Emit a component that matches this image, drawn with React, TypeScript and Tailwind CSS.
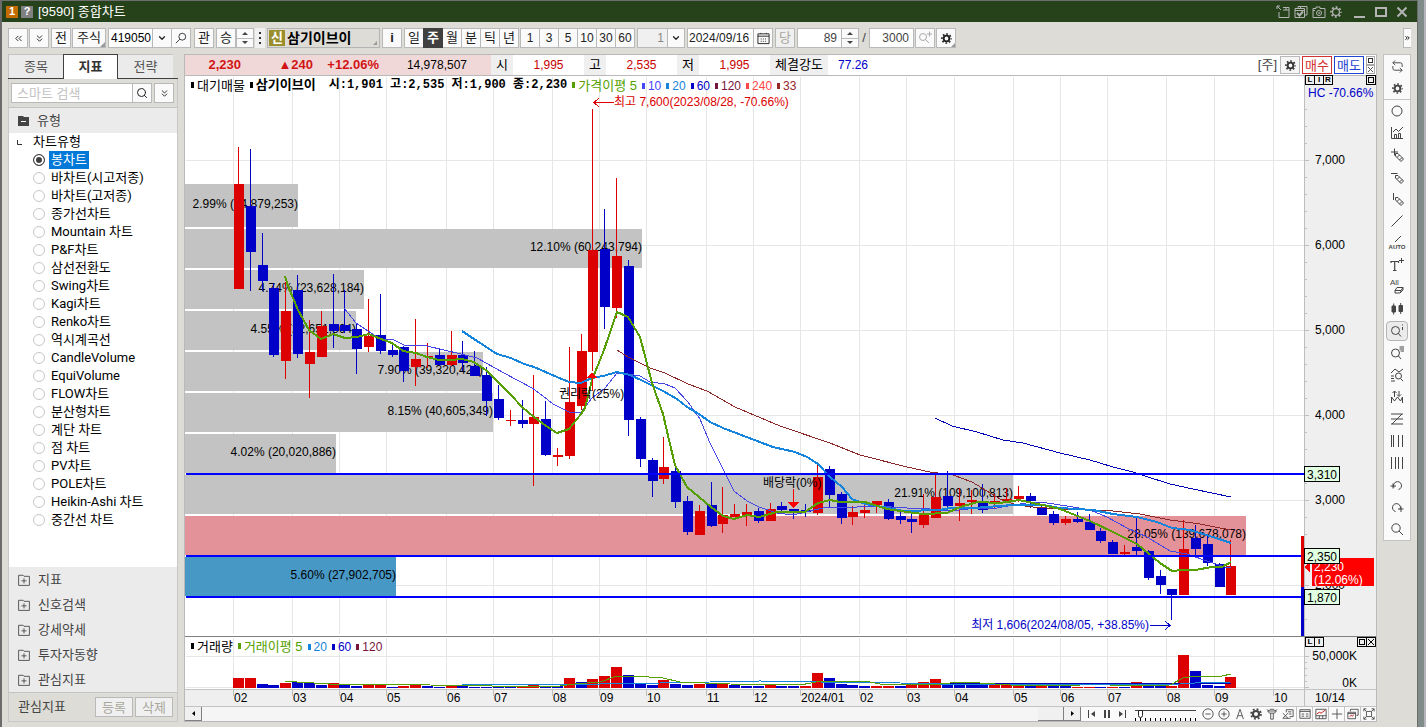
import type { ReactNode } from 'react'
import { ChevronDown, ChevronsDown, ChevronsLeft, ChevronsRight, Search } from 'lucide-react'

const RED = '#dc0000'
const BLUE = '#0000c8'

const CHART_TYPES = [
  '봉차트', '바차트(시고저종)', '바차트(고저종)', '종가선차트', 'Mountain 차트', 'P&F차트', '삼선전환도',
  'Swing차트', 'Kagi차트', 'Renko차트', '역시계곡선', 'CandleVolume', 'EquiVolume', 'FLOW차트',
  '분산형차트', '계단 차트', '점 차트', 'PV차트', 'POLE차트', 'Heikin-Ashi 차트', '중간선 차트',
]

const SECTIONS = ['지표', '신호검색', '강세약세', '투자자동향', '관심지표']

const PERIODS = ['일', '주', '월', '분', '틱', '년']
const MINUTES = ['1', '3', '5', '10', '30', '60']

// up?, high, body top, body bottom, low, volume up?, volume height
const CANDLES: number[][] = [
  [1, 147, 184, 289, 289, 1, 10], [0, 149, 206, 252, 291, 1, 10], [0, 233, 265, 281, 291, 0, 4], [0, 283, 288, 355, 357, 0, 3],
  [1, 282, 311, 361, 379, 1, 5], [0, 275, 290, 354, 358, 0, 6], [1, 320, 352, 364, 398, 0, 5], [1, 311, 326, 357, 357, 0, 3],
  [0, 274, 324, 331, 348, 1, 5], [0, 290, 325, 331, 333, 0, 3], [0, 323, 329, 349, 374, 0, 2], [1, 299, 336, 347, 352, 1, 3],
  [0, 294, 335, 351, 354, 1, 3], [0, 345, 350, 355, 357, 0, 1], [0, 346, 347, 371, 382, 1, 2], [1, 319, 359, 367, 386, 1, 4],
  [1, 343, 356, 357, 368, 0, 2], [0, 348, 355, 365, 365, 0, 1], [1, 331, 355, 365, 366, 1, 2], [0, 341, 355, 363, 371, 0, 2],
  [0, 351, 366, 376, 376, 0, 1], [0, 367, 375, 401, 416, 0, 1], [0, 385, 399, 418, 420, 0, 1], [1, 410, 420, 421, 426, 0, 1],
  [0, 400, 420, 424, 428, 1, 1], [1, 375, 417, 424, 486, 1, 4], [0, 401, 419, 455, 456, 0, 2], [1, 448, 455, 457, 466, 0, 2],
  [1, 347, 402, 456, 459, 1, 10], [1, 334, 351, 406, 410, 0, 6], [1, 109, 250, 352, 371, 1, 9], [0, 209, 249, 307, 329, 1, 12],
  [1, 178, 256, 308, 318, 1, 21], [0, 260, 266, 420, 436, 0, 13], [0, 417, 419, 459, 467, 0, 4], [0, 458, 460, 481, 497, 0, 3],
  [1, 437, 467, 479, 484, 1, 8], [0, 467, 471, 502, 508, 0, 4], [0, 496, 501, 532, 535, 0, 3], [1, 505, 511, 535, 535, 1, 4],
  [0, 482, 505, 526, 527, 0, 4], [1, 487, 515, 524, 533, 1, 5], [1, 504, 514, 517, 517, 0, 3], [1, 504, 512, 515, 526, 0, 2],
  [0, 508, 511, 521, 523, 0, 2], [1, 503, 509, 521, 521, 1, 3], [0, 502, 506, 510, 511, 0, 2], [0, 509, 509, 511, 519, 0, 2],
  [0, 504, 510, 512, 517, 1, 2], [1, 465, 477, 513, 515, 1, 15], [0, 466, 469, 495, 507, 0, 10], [0, 492, 494, 518, 524, 0, 4],
  [1, 506, 512, 517, 525, 0, 3], [1, 504, 510, 513, 518, 0, 2], [1, 501, 501, 505, 513, 1, 2], [0, 499, 502, 519, 520, 1, 2],
  [0, 511, 516, 520, 524, 0, 2], [0, 514, 519, 522, 533, 1, 3], [1, 494, 515, 525, 528, 1, 6], [1, 474, 497, 518, 518, 1, 9],
  [0, 471, 496, 506, 508, 0, 4], [1, 488, 503, 506, 521, 0, 4], [1, 490, 500, 502, 514, 0, 3], [0, 484, 502, 510, 513, 0, 3],
  [1, 494, 501, 504, 508, 1, 4], [1, 488, 499, 501, 502, 1, 3], [1, 486, 496, 499, 502, 1, 3], [0, 493, 496, 501, 508, 0, 2],
  [0, 506, 507, 515, 515, 1, 2], [0, 511, 514, 523, 525, 0, 3], [1, 516, 519, 523, 525, 0, 2], [0, 512, 519, 522, 523, 1, 1],
  [0, 514, 522, 530, 530, 1, 1], [0, 528, 531, 541, 543, 0, 1], [0, 540, 542, 554, 554, 1, 1], [1, 545, 552, 554, 555, 0, 1],
  [0, 517, 547, 551, 555, 1, 6], [0, 550, 551, 578, 580, 0, 3], [0, 570, 576, 585, 594, 0, 2], [0, 589, 589, 595, 620, 1, 2],
  [1, 520, 549, 595, 595, 1, 33], [0, 525, 538, 549, 555, 0, 17], [0, 536, 544, 563, 566, 0, 3], [0, 563, 564, 587, 587, 0, 2],
  [1, 540, 566, 595, 595, 1, 11],
]

const MA5 = '285,276 288,286 298,310 309,330 321,339 333,334 345,338 357,337 369,334 381,339 392,343 403,351 416,353 427,357 439,360 451,360 462,359 474,362 487,371 498,382 511,395 522,407 534,417 546,426 557,433 569,429 581,414 585,408 592,380 604,350 617,312 628,317 640,337 652,383 663,414 669,440 675,465 687,487 699,497 711,507 723,516 734,519 747,515 759,517 777,512 805,512 818,503 830,500 840,502 865,502 887,509 907,512 923,514 947,513 960,507 978,502 1000,503 1019,500 1033,503 1047,506 1060,509 1090,521 1113,532 1137,544 1160,563 1172,571 1183,570 1195,570 1212,567 1222,567 1231,562'
const MA10 = '344,308 356,323 371,333 381,339 394,340 404,345 427,346 461,354 477,358 504,373 532,388 543,396 553,404 569,412 581,412 592,398 605,388 617,373 628,374 640,376 650,382 665,384 675,388 688,402 700,419 710,443 723,469 734,491 747,501 759,507 777,513 793,515 810,511 827,507 857,507 877,506 907,508 920,508 950,511 977,508 997,508 1013,505 1033,502 1047,503 1067,506 1090,510 1107,517 1127,528 1147,537 1170,551 1187,554 1207,561 1225,567 1231,567'
const MA20 = '462,331 477,341 497,354 511,358 524,364 534,367 557,377 569,382 581,383 592,378 603,376 617,372 630,375 643,381 663,391 677,399 687,407 699,414 710,422 723,428 757,441 773,447 795,452 807,457 818,464 830,477 842,487 852,499 865,504 883,507 903,511 940,510 950,508 973,508 1013,505 1043,505 1060,508 1093,510 1113,514 1137,517 1157,522 1172,528 1190,530 1213,537 1231,543'
const MA33 = '617,350 628,357 650,368 665,373 688,384 707,391 735,407 780,426 830,443 860,455 907,467 930,472 938,473 953,475 972,482 982,488 1000,499 1017,505 1033,507 1060,509 1090,510 1113,511 1140,514 1170,520 1200,524 1220,528 1231,530'
const MA60 = '935,418 952,426 977,432 1003,440 1023,443 1060,453 1090,460 1113,467 1133,472 1145,476 1170,484 1193,489 1231,497'

const MONTHS: [number, string][] = [
  [233, '02'], [292, '03'], [339, '04'], [386, '05'], [446, '06'], [493, '07'], [552, '08'], [599, '09'], [646, '10'],
  [706, '11'], [753, '12'], [800, '2024/01'], [859, '02'], [906, '03'], [954, '04'], [1013, '05'], [1060, '06'],
  [1107, '07'], [1166, '08'], [1214, '09'], [1273, '10'],
]

const PROFILE = [
  { y: 184, h: 43, right: 298, label: '2.99% (14,879,253)', fill: '#c3c3c3' },
  { y: 229, h: 39, right: 642, label: '12.10% (60,243,794)', fill: '#c3c3c3' },
  { y: 270, h: 39, right: 364, label: '4.74% (23,628,184)', fill: '#c3c3c3' },
  { y: 311, h: 39, right: 356, label: '4.55% (22,651,864)', fill: '#c3c3c3' },
  { y: 352, h: 39, right: 483, label: '7.90% (39,320,421)', fill: '#c3c3c3' },
  { y: 393, h: 39, right: 493, label: '8.15% (40,605,349)', fill: '#c3c3c3' },
  { y: 434, h: 39, right: 336, label: '4.02% (20,020,886)', fill: '#c3c3c3' },
  { y: 475, h: 39, right: 1013, label: '21.91% (109,100,813)', fill: '#c3c3c3' },
  { y: 516, h: 39, right: 1246, label: '28.05% (139,678,078)', fill: '#e4929a' },
  { y: 557, h: 39, right: 396, label: '5.60% (27,902,705)', fill: '#4898c6' },
]

const LEVELS = [
  { y: 474, label: '3,310' },
  { y: 556, label: '2,350' },
  { y: 597, label: '1,870' },
]

const PRICE_LEGEND = [
  { label: '10', color: '#4646ff' },
  { label: '20', color: '#1484dc' },
  { label: '60', color: '#0000c8' },
  { label: '120', color: '#78143c' },
  { label: '240', color: '#ff4646' },
  { label: '33', color: '#962828' },
]

const VOLUME_LEGEND = [
  { label: '20', color: '#1484dc' },
  { label: '60', color: '#0000c8' },
  { label: '120', color: '#78143c' },
]

const candleX = (i: number) => Math.round(234 + 11.815 * i)

const BTN = 'flex h-5 shrink-0 items-center justify-center border border-[#b9b9b9] bg-[#fafafa] text-[13px] text-[#222]'

function Icon({ children, size = 14 }: { children: ReactNode; size?: number }) {
  return (
    <svg width={size} height={size} viewBox="0 0 14 14" fill="none" stroke="currentColor" strokeWidth="1" aria-hidden="true" className="overflow-visible">
      {children}
    </svg>
  )
}

function Gear({ size = 14, thin = false }: { size?: number; thin?: boolean }) {
  return (
    <Icon size={size}>
      <circle cx="7" cy="7" r={thin ? 4 : 3.6} strokeWidth={thin ? 1.4 : 2.4} />
      <circle cx="7" cy="7" r="5.8" strokeWidth="2" strokeDasharray="2.2 2.355" strokeDashoffset="1.1" />
    </Icon>
  )
}

function Pencil() {
  return <path d="M5.5 8V5.5H8L13.5 11L11 13.5ZM9.5 7L7 9.5M12 9.5L9.5 12" />
}

function Spinner({ label }: { label: string }) {
  return (
    <div className="flex h-5 w-[18px] shrink-0 flex-col border border-[#b9b9b9] bg-[#fafafa]">
      <button aria-label={`${label} 증가`} className="flex flex-1 items-center justify-center border-b border-[#b9b9b9]">
        <svg width="6" height="3" viewBox="0 0 6 3"><path d="M0 3L3 0L6 3Z" fill="#444" /></svg>
      </button>
      <button aria-label={`${label} 감소`} className="flex flex-1 items-center justify-center">
        <svg width="6" height="3" viewBox="0 0 6 3"><path d="M0 0L3 3L6 0Z" fill="#444" /></svg>
      </button>
    </div>
  )
}

function TitleBar() {
  return (
    <header className="flex h-[22px] shrink-0 items-center border-t border-[#6e6e6e] bg-[#25421a] pl-1 pr-2 text-white">
      <span className="flex h-3 w-3 items-center justify-center bg-[#c36a00] text-[11px] font-bold">1</span>
      <span className="ml-[3px] flex h-3 w-3 items-center justify-center bg-[#808080] text-[11px] font-bold">?</span>
      <h1 className="ml-[5px] text-[13px]">[9590] 종합차트</h1>
      <div className="ml-auto flex items-center gap-1 text-[#b4b4b4]">
        <button aria-label="분리">
          <Icon><path d="M1 1L5 5M1 4V1H4M7 2.5H13V12.5H3V7M7 5H13M10 2.5V5" /></Icon>
        </button>
        <button aria-label="창 복사">
          <Icon><path d="M4 3.5V1.5H13V10H11M1 3.5H10.5V12.5H1ZM1 5.5H10.5M6.5 1.5V3.5" /><path d="M3 8L5.5 10.5L9 6.5" strokeWidth="2" /></Icon>
        </button>
        <button aria-label="화면 캡처">
          <Icon><path d="M1 3.5H4V2H8V3.5H13V12.5H1ZM1 5.5H3" /><circle cx="7" cy="8" r="2.5" /><circle cx="7" cy="8" r=".5" /></Icon>
        </button>
        <button aria-label="환경설정"><Gear size={12} thin /></button>
        <button aria-label="최소화" className="ml-2 flex h-3 w-[11px] items-end"><span className="h-0.5 w-full bg-current" /></button>
        <button aria-label="최대화" className="ml-1.5 h-2.5 w-3 border-2 border-current" />
        <button aria-label="닫기" className="ml-1"><Icon><path d="M2.5 2.5L11.5 11.5M11.5 2.5L2.5 11.5" strokeWidth="2" /></Icon></button>
      </div>
    </header>
  )
}

function Toolbar() {
  return (
    <div className="flex h-8 shrink-0 items-center pl-1.5">
      <button aria-label="이전" className={`${BTN} w-5`}><ChevronsLeft size={11} strokeWidth={2} /></button>
      <button aria-label="펼치기" className={`${BTN} ml-px w-5`}><ChevronsDown size={11} strokeWidth={2} /></button>
      <button className={`${BTN} ml-0.5 w-5`}>전</button>
      <button className={`${BTN} relative ml-px w-[34px]`}>
        주식
        <svg className="absolute bottom-0 right-0" width="5" height="5"><path d="M5 0V5H0Z" fill="#999" /></svg>
      </button>
      <input aria-label="종목코드" defaultValue="419050" className="ml-0.5 h-5 w-[45px] shrink-0 border border-[#b9b9b9] bg-white pl-0.5 text-xs text-black" />
      <button aria-label="최근 종목" className={`${BTN} -ml-px w-5`}><ChevronDown size={10} strokeWidth={3} /></button>
      <button aria-label="종목 검색" className={`${BTN} -ml-px w-5`}>
        <Icon size={12}><circle cx="8.5" cy="5.5" r="4" /><path d="M5.5 8.5L1 13" /></Icon>
      </button>
      <button className={`${BTN} ml-[3px] w-5`}>관</button>
      <button className={`${BTN} ml-0.5 w-5`}>승</button>
      <Spinner label="종목" />
      <div className="ml-px flex h-5 w-2.5 shrink-0 flex-col items-center justify-center gap-[3px] bg-[#f0f0f0]">
        <i className="h-0.5 w-0.5 bg-[#333]" /><i className="h-0.5 w-0.5 bg-[#333]" /><i className="h-0.5 w-0.5 bg-[#333]" />
      </div>
      <div className="relative ml-0.5 flex h-5 w-[113px] shrink-0 items-center border border-[#b4b4b4] bg-[#dddcd6]">
        <span className="ml-px flex h-4 w-4 items-center justify-center bg-[#9b8f2d] text-[13px] font-bold text-white">신</span>
        <strong className="ml-0.5 text-sm leading-none text-black">삼기이브이</strong>
        <svg className="absolute bottom-0.5 right-0.5" width="4" height="4"><path d="M4 0V4H0Z" fill="#999" /></svg>
      </div>
      <button className={`${BTN} ml-0.5 w-5 font-bold`}>i</button>
      <div className="ml-0.5 flex">
        {PERIODS.map((p) => (
          <button key={p} className={`-mr-px flex h-5 w-5 items-center justify-center border text-[13px] ${p === '주' ? 'z-10 border-[#404040] bg-[#404040] font-bold text-white' : 'border-[#b9b9b9] bg-[#fafafa] text-[#222]'}`}>
            {p}
          </button>
        ))}
      </div>
      <div className="ml-0.5 flex">
        {MINUTES.map((m) => (
          <button key={m} className="-mr-px flex h-5 w-5 items-center justify-center border border-[#b9b9b9] bg-[#fafafa] text-xs text-[#222]">
            {m}
          </button>
        ))}
      </div>
      <input aria-label="주기" defaultValue="1" className="ml-[3px] h-5 w-[31px] shrink-0 border border-[#b9b9b9] bg-[#f0f0f0] pr-[3px] text-right text-xs text-[#888]" />
      <button aria-label="주기 선택" className={`${BTN} -ml-px w-[18px]`}><ChevronDown size={10} strokeWidth={3} /></button>
      <input aria-label="기준일" defaultValue="2024/09/16" className="ml-0.5 h-5 w-[67px] shrink-0 border border-[#b9b9b9] bg-white pl-px text-xs text-[#222]" />
      <button aria-label="달력" className={`${BTN} -ml-px w-5`}>
        <Icon size={13}><path d="M1 2H13V12.5H1ZM1 4.5H13M4 1V2M10 1V2" /><path d="M4 7.5H11M4 10H10" strokeDasharray="1 1.3" /></Icon>
      </button>
      <button className="ml-0.5 flex h-5 w-5 shrink-0 items-center justify-center border border-[#b9b9b9] bg-[#f0f0f0] text-[13px] text-[#a9a79d]">당</button>
      <input aria-label="표시 개수" defaultValue="89" className="ml-0.5 h-5 w-[45px] shrink-0 border border-[#b9b9b9] bg-white pr-1 text-right text-xs text-[#444]" />
      <div className="-ml-px"><Spinner label="표시 개수" /></div>
      <span className="w-2.5 shrink-0 text-center text-[13px] text-[#444]">/</span>
      <input aria-label="전체 개수" defaultValue="3000" className="h-5 w-[45px] shrink-0 border border-[#b9b9b9] bg-white pr-1 text-right text-xs text-[#444]" />
      <button aria-label="확대 검색" className={`${BTN} ml-px w-5`}>
        <span className="text-[#aaa]"><Icon><circle cx="5" cy="6" r="3.5" /><path d="M7.5 8.5L11 12M9 3H14M11.5 .5V5.5" /></Icon></span>
      </button>
      <button aria-label="차트 설정" className={`${BTN} relative ml-px w-5`}>
        <Gear size={11} />
        <svg className="absolute bottom-0 right-0" width="4" height="4"><path d="M4 0V4H0Z" fill="#999" /></svg>
      </button>
      <button aria-label="더보기" className="ml-auto mr-1.5 flex h-5 w-2 items-center justify-center border-l border-y border-[#b9b9b9] bg-[#fafafa]">
        <ChevronsRight size={8} strokeWidth={3} />
      </button>
    </div>
  )
}

function Sidebar() {
  return (
    <aside className="flex w-[170px] shrink-0 flex-col">
      <div role="tablist" className="flex h-[25px] border-b border-[#404040] text-[13px] text-[#555]">
        <button role="tab" className="w-[55px] border-l border-t border-[#c3c3c3] bg-[#ebebeb]">종목</button>
        <button role="tab" aria-selected="true" className="-mb-px w-[55px] border-x border-t border-[#404040] bg-white font-bold text-[#333]">지표</button>
        <button role="tab" className="w-[55px] border-t border-[#c3c3c3] bg-[#ebebeb]">전략</button>
      </div>
      <div className="flex flex-1 flex-col border-x border-b border-[#c8c8c8]">
        <div className="flex h-7 items-center pl-0.5">
          <input aria-label="지표 검색" placeholder="스마트 검색" className="h-5 w-[122px] border border-[#b9b9b9] bg-white pl-[5px] text-[13px] placeholder:text-[#c3c3c3]" />
          <button aria-label="검색" className={`${BTN} -ml-px w-5`}><Search size={12} strokeWidth={2} /></button>
          <button aria-label="펼치기" className={`${BTN} ml-0.5 w-5`}><ChevronsDown size={11} strokeWidth={2} /></button>
        </div>
        <div className="flex h-[26px] items-center gap-2 border-t border-[#c3c3c3] bg-[#ebebeb] pl-[9px] text-[13px] leading-none text-[#444]">
          <svg width="11" height="10" viewBox="0 0 11 10"><path d="M0 0H5L6 1H11V10H0Z" fill="#444" /><path d="M3 5.5H8" stroke="#fff" /></svg>
          유형
        </div>
        <div role="radiogroup" aria-label="차트유형" className="flex-1 bg-white pl-6 font-['Roboto','Noto_Sans_CJK_KR',sans-serif] text-[13px] text-black">
          <div className="-ml-4 flex h-[18px] items-center">
            <svg width="5" height="5"><path d="M.5 0V4.5H5" fill="none" stroke="#333" /></svg>
            <span className="ml-[11px] leading-[18px]">차트유형</span>
          </div>
          {CHART_TYPES.map((type, i) => (
            <label key={type} className="flex h-[18px] items-center gap-1 leading-[18px]">
              <input
                type="radio"
                name="chart-type"
                defaultChecked={i === 0}
                className="peer m-0 h-3 w-3 appearance-none rounded-full border border-[#c6c6c6] bg-white checked:border-[#404040] checked:bg-[#404040] checked:shadow-[inset_0_0_0_2px_white]"
              />
              <span className="px-0.5 peer-checked:bg-[#0078d7] peer-checked:text-white">{type}</span>
            </label>
          ))}
        </div>
        <div className="bg-[#ebebeb]">
          {SECTIONS.map((name) => (
            <button key={name} className="flex h-[25px] w-full items-center gap-2 pl-[9px] text-[13px] leading-none text-[#444]">
              <Icon size={12}><path d="M.7 1.5H6L7 2.7H13.3V13.3H.7ZM7 5V11M4 8H10" /></Icon>
              {name}
            </button>
          ))}
        </div>
        <div className="flex h-[29px] items-center border-t border-[#c3c3c3] text-[13px] text-[#444]">
          <span className="ml-[9px]">관심지표</span>
          <button className="ml-auto h-5 w-[38px] border border-[#b9b9b9] bg-[#f0f0f0] leading-none text-[#a9a79d]">등록</button>
          <button className="ml-0.5 mr-1 h-5 w-[38px] border border-[#b9b9b9] bg-[#f0f0f0] leading-none text-[#a9a79d]">삭제</button>
        </div>
      </div>
    </aside>
  )
}

function Quote({ label, value }: { label: string; value: string }) {
  return (
    <>
      <span className="flex w-[22px] items-center justify-center bg-[#efefef] text-[13px] text-black">{label}</span>
      <span className="flex w-[71px] items-center justify-center text-[#c80000]">{value}</span>
    </>
  )
}

function InfoRow() {
  return (
    <div className="flex h-[21px] shrink-0 items-stretch border-b border-[#b9b9b9] bg-white text-xs">
      <div className="flex w-[306px] items-center bg-[#f0d8d8] text-black">
        <strong className="w-14 text-right text-[13px] text-[#d21414]">2,230</strong>
        <strong className="w-[72px] text-right text-[13px] text-[#d21414]">▲240</strong>
        <strong className="w-[66px] text-right text-[13px] text-[#d21414]">+12.06%</strong>
        <span className="w-[88px] text-right">14,978,507</span>
      </div>
      <Quote label="시" value="1,995" />
      <Quote label="고" value="2,535" />
      <Quote label="저" value="1,995" />
      <span className="flex w-[58px] items-center justify-center bg-[#efefef] text-[13px] text-black">체결강도</span>
      <span className="ml-2.5 flex items-center text-[#0000c8]">77.26</span>
      <div className="ml-auto flex items-center pr-px text-[13px]">
        <span className="mr-[3px] text-[#444]">[주]</span>
        <button aria-label="설정" className="flex h-[18px] w-5 items-center justify-center border border-[#b9b9b9] bg-[#f5f5f5] text-[#333]"><Gear size={11} /></button>
        <button className="ml-0.5 h-[18px] w-[30px] border border-[#d23232] leading-none text-[#d23232]">매수</button>
        <button className="ml-0.5 h-[18px] w-[30px] border border-[#1e46d2] leading-none text-[#1e46d2]">매도</button>
        <div className="ml-0.5 flex flex-col">
          <button aria-label="창 최대화" className="flex h-[9px] w-[9px] items-center justify-center border border-[#aaa]"><i className="h-[5px] w-[5px] border border-[#333]" /></button>
          <button aria-label="창 닫기" className="flex h-[9px] w-[9px] items-center justify-center border border-[#aaa]">
            <svg width="5" height="5"><path d="M0 0L5 5M5 0L0 5" stroke="#555" /></svg>
          </button>
        </div>
      </div>
    </div>
  )
}

function LegendItem({ label, color }: { label: string; color: string }) {
  return (
    <span className="flex items-center gap-[3px]" style={{ color }}>
      <i className="h-1.5 w-[3px] bg-current" />
      {label}
    </span>
  )
}

const MINI = 'flex h-2.5 items-center justify-center border border-black bg-[#efefef] text-[8px] font-bold leading-none text-black'

function PriceChart() {
  return (
    <div className="relative flex min-h-0 flex-1">
      <svg className="w-full" viewBox="185 76 1191 560" shapeRendering="crispEdges" role="img" aria-label="삼기이브이 주봉 차트" fontSize="12">
        <rect x="1304" y="76" width="72" height="560" fill="#efefef" />
        {MONTHS.map(([x]) => <rect key={x} x={x} y="77" width="1" height="557" fill="#e6e6e6" />)}
        {[160, 245, 330, 415, 500, 585].map((y) => <rect key={y} x="186" y={y} width="1118" height="1" fill="#e6e6e6" />)}

        {PROFILE.map((p) => <rect key={p.y} x="185" y={p.y} width={p.right - 185} height={p.h} fill={p.fill} />)}
        {PROFILE.map((p) => (
          <text key={p.y} x={p.right} y={p.y === 184 ? 208 : p.y + 22} textAnchor="end">{p.label}</text>
        ))}

        {CANDLES.map(([up, high, top, bottom, low], i) => (
          <g key={i} fill={up ? RED : BLUE}>
            <rect x={candleX(i) + 4} y={high} width="1" height={low - high} />
            <rect x={candleX(i)} y={top} width="10" height={bottom - top} />
          </g>
        ))}

        <g fill="none">
          <polyline points={MA10} stroke="#4646e6" />
          <polyline points={MA33} stroke="#8c2828" />
          <polyline points={MA60} stroke="#0000b4" />
          <polyline points={MA20} stroke="#1484dc" strokeWidth="2" />
          <polyline points={MA5} stroke="#55a000" strokeWidth="2" />
        </g>

        {LEVELS.map((l) => <rect key={l.y} x="186" y={l.y - 1} width="1118" height="2" fill="#0000ff" />)}

        <path d="M592 372L597 378H587Z" fill="#ff0000" />
        <path d="M592.5 378V391M793.5 489V502" stroke="#ff0000" />
        <path d="M788 502H799L793.5 508Z" fill="#ff0000" />
        <text x="559" y="398">권리락(25%)</text>
        <text x="763" y="487">배당락(0%)</text>

        <path d="M614 102.5H594M599 98L594 102.5L599 107" fill="none" stroke={RED} />
        <text x="614" y="106" fill={RED}>최고 7,600(2023/08/28, -70.66%)</text>
        <text x="1149" y="629" fill={BLUE} textAnchor="end">최저 1,606(2024/08/05, +38.85%)</text>
        <path d="M1150 625.5H1170M1165 621L1170 625.5L1165 630" fill="none" stroke={BLUE} />

        {/* price axis */}
        <rect x="1304" y="76" width="1" height="560" fill="#bebebe" />
        {Array.from({ length: 31 }, (_, i) => 109 + i * 17).map((y) => (
          <rect key={y} x="1305" y={y} width={y % 85 === 75 ? 4 : 2} height="1" fill="#bebebe" />
        ))}
        {['7,000', '6,000', '5,000', '4,000', '3,000', '2,000'].map((p, i) => (
          <text key={p} x="1315" y={164 + i * 85}>{p}</text>
        ))}
        <text x="1308" y="97" fill="#0000c8">HC -70.66%</text>
        <rect x="1301" y="536" width="3" height="51" fill={RED} />
        <rect x="1301" y="587" width="3" height="49" fill={BLUE} />
        <rect x="1312" y="558" width="62" height="28" fill="#ff0000" />
        <path d="M1304 567L1310 562V572Z" fill="#ff0000" />
        <text x="1314" y="571" fill="#fff">2,230</text>
        <text x="1314" y="584" fill="#fff">(12.06%)</text>
        {LEVELS.map((l) => (
          <g key={l.y}>
            <rect x="1304.5" y={l.y - 7.5} width="35" height="15" fill="#e1ffe1" stroke="#000" />
            <text x="1307" y={l.y + 5}>{l.label}</text>
          </g>
        ))}
      </svg>

      <div className="absolute left-1.5 top-0 flex h-[19px] items-center gap-[5px] text-xs text-black">
        <span className="text-[13px]"><LegendItem label="대기매물" color="#000" /></span>
        <span className="flex items-center gap-[3px] font-['Liberation_Mono','Noto_Sans_CJK_KR',monospace] font-bold">
          <i className="h-1.5 w-[3px] bg-black" />
          <span className="text-[13px]">삼기이브이</span>
          <span className="ml-2.5">시:1,901 고:2,535 저:1,900 종:2,230</span>
        </span>
        <span className="text-[13px]"><LegendItem label="가격이평 5" color="#55a000" /></span>
        {PRICE_LEGEND.map((l) => <LegendItem key={l.label} {...l} />)}
      </div>
      <div className="absolute right-11 -top-px flex">
        {['L', 'I', 'R'].map((t) => <button key={t} className={`${MINI} -mr-px w-2.5`}>{t}</button>)}
      </div>
      <button aria-label="확대" className={`${MINI} absolute -top-px right-0 w-2.5`}><i className="h-1.5 w-1.5 border border-black" /></button>
    </div>
  )
}

function VolumeChart() {
  return (
    <div className="relative flex h-[53px] shrink-0 border-t border-[#808080]">
      <svg className="w-full" viewBox="185 637 1191 52" shapeRendering="crispEdges" role="img" aria-label="거래량 차트" fontSize="12">
        <rect x="1304" y="637" width="72" height="52" fill="#efefef" />
        {MONTHS.map(([x]) => <rect key={x} x={x} y="638" width="1" height="51" fill="#e6e6e6" />)}
        <rect x="186" y="656" width="1118" height="1" fill="#e6e6e6" />
        <rect x="186" y="687" width="1118" height="1" fill="#e6e6e6" />
        {CANDLES.map(([, , , , , up, h], i) => (
          <rect key={i} x={candleX(i) - 1} y={688 - h} width="11" height={h} fill={up ? RED : BLUE} />
        ))}
        <g fill="none">
          <polyline points="940,683 1231,683" stroke="#0000b4" />
          <polyline points="462,684 480,685 600,684 660,683 760,681 820,682 900,683 940,684 1000,684 1100,685 1180,684 1195,683 1231,682" stroke="#1484dc" />
          <polyline points="285,681 297,682 330,684 380,684 430,685 552,687 575,684 600,682 617,676 635,676 663,678 680,682 730,684 800,685 822,681 865,681 880,684 940,684 960,682 980,683 1010,685 1080,686 1110,686 1170,685 1183,678 1195,676 1222,676 1231,674" stroke="#55a000" />
        </g>
        <rect x="1304" y="637" width="1" height="52" fill="#bebebe" />
        {[656, 662, 668, 675, 681, 687].map((y, i) => <rect key={y} x="1305" y={y} width={i % 5 ? 2 : 4} height="1" fill="#bebebe" />)}
        <text x="1357" y="660" textAnchor="end">50,000K</text>
        <text x="1357" y="687" textAnchor="end">0K</text>
      </svg>
      <div className="absolute left-1.5 top-0 flex h-[19px] items-center gap-[5px] text-xs">
        <span className="text-[13px]"><LegendItem label="거래량" color="#000" /></span>
        <span className="text-[13px]"><LegendItem label="거래이평 5" color="#55a000" /></span>
        {VOLUME_LEGEND.map((l) => <LegendItem key={l.label} {...l} />)}
      </div>
      <div className="absolute right-[53px] top-0 flex">
        {['L', 'I'].map((t) => <button key={t} className={`${MINI} -mr-px w-2.5`}>{t}</button>)}
      </div>
      <div className="absolute right-0 top-0 flex">
        <button aria-label="거래량 확대" className={`${MINI} -mr-px w-2.5`}><i className="h-1.5 w-1.5 border border-black" /></button>
        <button aria-label="거래량 닫기" className={`${MINI} w-2.5`}>
          <svg width="6" height="6"><path d="M0 0L6 6M6 0L0 6" stroke="#000" /></svg>
        </button>
      </div>
    </div>
  )
}

const BOTTOM_ICONS: [string, ReactNode][] = [
  ['축소', <><circle cx="7" cy="7" r="6" /><path d="M4 7H10" /></>],
  ['확대', <><circle cx="7" cy="7" r="6" /><path d="M4 7H10M7 4V10" /></>],
  ['자동', <path d="M3 13L7 1.5L11 13M4.5 9H9.5" />],
  ['설정', <><circle cx="7" cy="7" r="3.6" strokeWidth="2.4" /><circle cx="7" cy="7" r="5.8" strokeWidth="2" strokeDasharray="2.2 2.355" /></>],
  ['도구', <path d="M1 1.5L3 3.5L5 1.5H9L11 3.5L13 1.5M2 3.5H12L10 6H4ZM5.5 6V13H8.5V6" />],
  ['엑셀', <path d="M5 5V2H13V10H9M7 4.5H11M8 7H11M1 6L7 12M7 6L1 12M1 12H10" />],
]

const BOTTOM_BOXES: [string, ReactNode][] = [
  ['목록', <path d="M1 2H13V12H1ZM1 4H13M3 7H6M8 7H11M3 9.5H6M8 9.5H11" />],
  ['미니차트', <><path d="M1 1.5H13V12.5H1ZM1 9H13M5 9V12.5M9 9V12.5" /><path d="M2 7L5 5L7 6L12 2.5" stroke="#c80000" /></>],
  ['십자선', <path d="M7 1V13M1 7H13" />],
  ['겹치기', <><path d="M4 4V1.5H13V8.5H11M1 5H10V12.5H1ZM1 6.5H10" /><path d="M3 10L5 8.5L6 9.5L8 8" stroke="#c80000" /></>],
  ['전체화면', <path d="M4 4H10V10H4ZM1 4V1H4M10 1H13V4M13 10V13H10M4 13H1V10M1 1L4 4M13 1L10 4M13 13L10 10M1 13L4 10" />],
]

function BottomBar() {
  const arrow = 'flex h-full w-[17px] shrink-0 items-center justify-center border-b border-r border-[#808080] bg-[#f0f0f0]'
  const icon = 'flex w-4 items-center justify-center'
  return (
    <div className="flex h-[15px] shrink-0 items-stretch border-t border-[#c3c3c3] bg-[#fafafa] text-[#444]">
      <button aria-label="왼쪽으로" className={arrow}><svg width="3" height="5"><path d="M3 0V5L0 2.5Z" fill="#000" /></svg></button>
      <div className="flex flex-1 justify-end bg-[#f5f5f5]">
        <div className="w-[26px] border-b border-r border-[#808080] bg-[#f0f0f0]" />
      </div>
      <button aria-label="오른쪽으로" className={arrow}><svg width="3" height="5"><path d="M0 0V5L3 2.5Z" fill="#000" /></svg></button>
      <button aria-label="처음" className="ml-[3px] flex w-[15px] items-center justify-center"><svg width="8" height="8"><path d="M.5 0V8" stroke="#444" /><path d="M7 1V7L3 4Z" fill="#444" /></svg></button>
      <button aria-label="정지" className="flex w-[15px] items-center justify-center"><svg width="6" height="8"><path d="M1 0V8M5 0V8" stroke="#444" strokeWidth="2" /></svg></button>
      <button aria-label="끝" className="flex w-[15px] items-center justify-center"><svg width="8" height="8"><path d="M7.5 0V8" stroke="#444" /><path d="M1 1V7L5 4Z" fill="#444" /></svg></button>
      <input
        type="range"
        aria-label="재생 속도"
        min="0"
        max="100"
        defaultValue="5"
        className="ml-1.5 w-[61px] appearance-none bg-[linear-gradient(#444,#444),repeating-linear-gradient(90deg,#000_0_1px,transparent_1px_5px)] bg-[size:100%_1px,100%_3px] bg-[position:0_3px,0_100%] bg-no-repeat [&::-webkit-slider-thumb]:h-2 [&::-webkit-slider-thumb]:w-[5px] [&::-webkit-slider-thumb]:appearance-none [&::-webkit-slider-thumb]:rounded-b-sm [&::-webkit-slider-thumb]:border [&::-webkit-slider-thumb]:border-[#222] [&::-webkit-slider-thumb]:bg-white"
      />
      <div className="ml-1 flex">
        {BOTTOM_ICONS.map(([label, art]) => (
          <button key={label} aria-label={label} className={icon}><Icon size={12}>{art}</Icon></button>
        ))}
        {BOTTOM_BOXES.map(([label, art]) => (
          <button key={label} aria-label={label} className={`${icon} border-l border-[#c3c3c3]`}><Icon size={12}>{art}</Icon></button>
        ))}
      </div>
    </div>
  )
}

const TOOLS: [string, ReactNode][] = [
  ['원', <circle cx="7" cy="7" r="5" />],
  ['보조차트', <path d="M1.5 1V12.5H13M3 6L6 3L8.5 5.5L13 1M4.5 12V8.5H6.5V12M8.5 12V7.5H10.5V12" />],
  ['십자선 그리기', <><path d="M1 4H8M4.5 .5V7.5" /><Pencil /></>],
  ['수평선 그리기', <><path d="M1 3.5H7.5" /><Pencil /></>],
  ['수직선 그리기', <><path d="M3.5 1V8" /><Pencil /></>],
  ['추세선', <path d="M1.5 12.5L12.5 1.5" />],
  ['자동 추세선', <><path d="M5 6L11 0" /><text x="7" y="13" fontSize="6" textAnchor="middle" fill="currentColor" stroke="none" fontWeight="700">AUTO</text></>],
  ['문자', <><path d="M1 5V3.5H8.5V5M4.7 3.5V12.5M3 12.5H6.5" strokeWidth="1.2" /><path d="M9 2.5H14M11.5 0V5" /></>],
  ['모두 지우기', <><text x="0" y="5" fontSize="8" fill="currentColor" stroke="none">All</text><path d="M7 7.5H13L11 10.5H5ZM5 10.5V13H10L13 10V7.5M11 10.5L10.5 13" /></>],
  ['봉 모양', <path d="M2 4H5.5V10H2ZM3.7 1.5V12.5M9 3.5H12.5V9.5H9ZM10.7 1V12" fill="currentColor" />],
  ['정보 보기', <><circle cx="5.5" cy="6.5" r="4" /><path d="M8.3 9.3L11 12.5M12.5 .5V1.5M12.5 3V6" /></>],
  ['목록 보기', <><circle cx="5.5" cy="7" r="4" /><path d="M8.3 9.8L11 13M9.5 1H14M9.5 3H14M10.5 5H14" /></>],
  ['패턴 검색', <><path d="M1 5L5 1L9 4L13 1M1 8H4M1 10.5H4M1 13H5" /><circle cx="8.5" cy="8" r="3" /><path d="M10.5 10.5L13 13" /></>],
  ['파동', <path d="M1.5 13V7L4.5 11L7.5 7L10.5 11L12.5 7V13M4.5 7V1M2.5 3L4.5 1L6.5 3M9 1V6M7 4.5L9 6.5L11 4.5" />],
  ['피보나치', <path d="M1 2H13M1 7H13M1 12H13M12 2L2 12" />],
  ['시간대', <path d="M1.5 1V13M3.5 1V13M8.5 1V13M12.5 1V13" shapeRendering="crispEdges" />],
  ['등간격', <path d="M1.5 1V13M5.5 1V13M8.5 1V13M12.5 1V13" shapeRendering="crispEdges" />],
  ['되돌리기', <path d="M4 9.5A4 4 0 1 1 8.5 11.5M.5 8H6M3 5.5V10.5" />],
  ['다시하기', <path d="M10 9.5A4 4 0 1 0 5.5 11.5M8 9H13.5M11 6.5V12" />],
  ['돋보기', <><circle cx="6" cy="6" r="4.2" /><path d="M9 9L13 13" /></>],
]

function ToolColumn() {
  return (
    <nav aria-label="차트 도구" className="w-7 shrink-0 self-start border border-[#c3c3c3] bg-[#fafafa] text-[#444]">
      <button aria-label="새로고침" className="flex h-[22px] w-full items-center justify-center">
        <Icon size={13}><path d="M4.5 .5L2 3L4.5 5.5M2 3H10Q12 3 12 5V7.5M2 6.5V9Q2 11 4 11H12M9.5 8.5L12 11L9.5 13.5" /></Icon>
      </button>
      <button aria-label="도구 설정" className="flex h-[22px] w-full items-center justify-center"><Gear size={11} /></button>
      <div className="border-t border-[#c3c3c3]">
        {TOOLS.map(([label, art]) => (
          <div key={label} className="flex h-[22px] items-center justify-center">
            <button
              aria-label={label}
              className={label === '정보 보기' ? 'flex h-5 w-[22px] items-center justify-center rounded border border-[#b4b4b4] bg-[#ebebeb]' : 'flex h-5 w-[22px] items-center justify-center'}
            >
              <Icon>{art}</Icon>
            </button>
          </div>
        ))}
      </div>
    </nav>
  )
}

export default function App() {
  return (
    <div className="flex h-screen min-h-[600px] font-['Liberation_Sans','Noto_Sans_CJK_KR',sans-serif]">
      <div className="w-0.5 shrink-0 bg-[#6b6b6b]" />
      <div className="flex min-w-0 flex-1 flex-col bg-[#dddcd6]">
        <TitleBar />
        <Toolbar />
        <div className="flex min-h-0 flex-1 gap-1.5 px-1.5 pb-[5px]">
          <Sidebar />
          <main className="flex min-w-0 flex-1 flex-col border border-[#b9b9b9] bg-white">
            <InfoRow />
            <PriceChart />
            <VolumeChart />
            <div className="flex h-[17px] shrink-0 border-t border-[#c3c3c3] bg-[#efefef]">
              <svg className="w-full" viewBox="185 690 1191 16" shapeRendering="crispEdges" fontSize="12" role="img" aria-label="날짜 축">
                {MONTHS.map(([x, label]) => (
                  <g key={x}>
                    <rect x={x} y="690" width="1" height="6" fill="#bebebe" />
                    <text x={x + 1} y="702">{label}</text>
                  </g>
                ))}
                <rect x="1304" y="690" width="1" height="16" fill="#bebebe" />
                <text x="1315" y="702">10/14</text>
              </svg>
            </div>
            <BottomBar />
          </main>
          <ToolColumn />
        </div>
      </div>
      <div className="w-[9px] shrink-0 border-l border-r-2 border-l-[#6b6b6b] border-r-[#b4b4bc] bg-[#7f8c8a]" />
    </div>
  )
}
